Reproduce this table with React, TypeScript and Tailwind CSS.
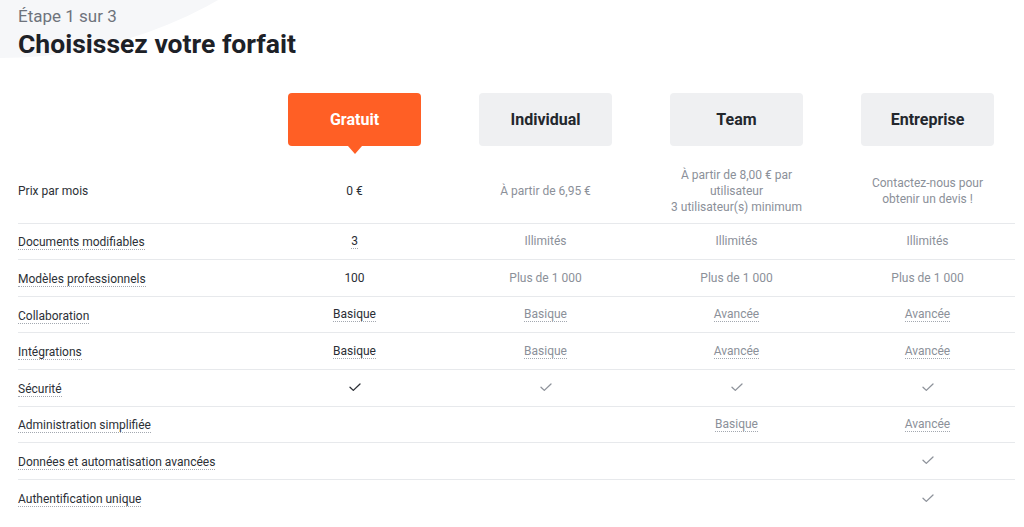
import React from 'react'

// Tableau de comparaison des forfaits — étape 1 du tunnel d'inscription

type Cell = { text?: string; check?: boolean; dotted?: boolean } | null

type Row = { label: string; cells: Cell[] }

const plans = ['Gratuit', 'Individual', 'Team', 'Entreprise']

const rows: Row[] = [
  {
    label: 'Documents modifiables',
    cells: [{ text: '3', dotted: true }, { text: 'Illimités' }, { text: 'Illimités' }, { text: 'Illimités' }],
  },
  {
    label: 'Modèles professionnels',
    cells: [{ text: '100' }, { text: 'Plus de 1 000' }, { text: 'Plus de 1 000' }, { text: 'Plus de 1 000' }],
  },
  {
    label: 'Collaboration',
    cells: [
      { text: 'Basique', dotted: true },
      { text: 'Basique', dotted: true },
      { text: 'Avancée', dotted: true },
      { text: 'Avancée', dotted: true },
    ],
  },
  {
    label: 'Intégrations',
    cells: [
      { text: 'Basique', dotted: true },
      { text: 'Basique', dotted: true },
      { text: 'Avancée', dotted: true },
      { text: 'Avancée', dotted: true },
    ],
  },
  {
    label: 'Sécurité',
    cells: [{ check: true }, { check: true }, { check: true }, { check: true }],
  },
  {
    label: 'Administration simplifiée',
    cells: [null, null, { text: 'Basique', dotted: true }, { text: 'Avancée', dotted: true }],
  },
  {
    label: 'Données et automatisation avancées',
    cells: [null, null, null, { check: true }],
  },
  {
    label: 'Authentification unique',
    cells: [null, null, null, { check: true }],
  },
]

function Check({ dark }: { dark: boolean }) {
  return (
    <svg width="12" height="9" viewBox="0 0 12 9" fill="none">
      <path
        d="M1 4.2 L4.3 7.4 L11 1"
        stroke={dark ? '#2a2e35' : '#8d929a'}
        strokeWidth="1.3"
        strokeLinecap="round"
        strokeLinejoin="round"
      />
    </svg>
  )
}

function ValueCell({ cell, first }: { cell: Cell; first: boolean }) {
  if (!cell) return <div />
  const color = first ? 'text-[#2a2e35]' : 'text-[#8b9099]'
  if (cell.check) {
    return (
      <div className="flex items-center justify-center">
        <Check dark={first} />
      </div>
    )
  }
  return (
    <div className={`flex items-center justify-center text-[12px] ${color}`}>
      <span
        className={
          cell.dotted ? 'border-b border-dotted border-[#a3a8b0] leading-[14px]' : 'leading-[14px]'
        }
      >
        {cell.text}
      </span>
    </div>
  )
}

export default function App() {
  return (
    <div
      className="relative w-[1024px] h-[527px] overflow-hidden bg-white"
      style={{ fontFamily: 'Roboto, "Liberation Sans", sans-serif' }}
    >
      {/* Décor — grand disque gris clair en haut à gauche */}
      <div className="absolute left-[-439px] top-[-820px] w-[878px] h-[878px] rounded-full bg-[#f6f7f9]" />

      <div className="relative px-[18px] pt-[5px]">
        <p className="text-[17px] leading-[22px] text-[#6e737c]">Étape 1 sur 3</p>
        <h1 className="text-[26.5px] leading-[33px] font-bold text-[#1d2127]">Choisissez votre forfait</h1>

        {/* En-têtes des forfaits */}
        <div className="mt-[33px] grid grid-cols-[241px_191px_191px_191px_191px] pb-[14px]">
          <div />
          {plans.map((p, i) => (
            <div key={p} className="flex justify-center">
              <div
                className={`relative flex items-center justify-center w-[133px] h-[53px] rounded-[4px] text-[16px] font-bold ${
                  i === 0 ? 'bg-[#ff5f25] text-white' : 'bg-[#eff0f2] text-[#23272d]'
                }`}
              >
                {p}
                {i === 0 && (
                  <span className="absolute left-1/2 top-full -translate-x-1/2 w-0 h-0 border-x-[7px] border-x-transparent border-t-[8px] border-t-[#ff5f25]" />
                )}
              </div>
            </div>
          ))}
        </div>

        {/* Ligne prix */}
        <div className="w-[997px] h-[63.6px] grid grid-cols-[241px_191px_191px_191px_191px] items-center border-b border-[#e7e9ec] text-[12px] leading-[16px]">
          <div className="text-[#2c3036]">Prix par mois</div>
          <div className="text-center text-[#2a2e35]">0 €</div>
          <div className="text-center text-[#8b9099]">À partir de 6,95 €</div>
          <div className="text-center text-[#8b9099]">
            À partir de 8,00 € par
            <br />
            utilisateur
            <br />3 utilisateur(s) minimum
          </div>
          <div className="text-center text-[#8b9099]">
            Contactez-nous pour
            <br />
            obtenir un devis !
          </div>
        </div>

        {rows.map((r, ri) => (
          <div
            key={r.label}
            className={`w-[997px] h-[36.6px] grid grid-cols-[241px_191px_191px_191px_191px] items-center ${
              ri < rows.length - 1 ? 'border-b border-[#e7e9ec]' : ''
            }`}
          >
            <div>
              <span className="text-[12px] leading-[14px] text-[#2c3036] border-b border-dotted border-[#a3a8b0]">
                {r.label}
              </span>
            </div>
            {r.cells.map((c, ci) => (
              <ValueCell key={ci} cell={c} first={ci === 0} />
            ))}
          </div>
        ))}
      </div>
    </div>
  )
}
